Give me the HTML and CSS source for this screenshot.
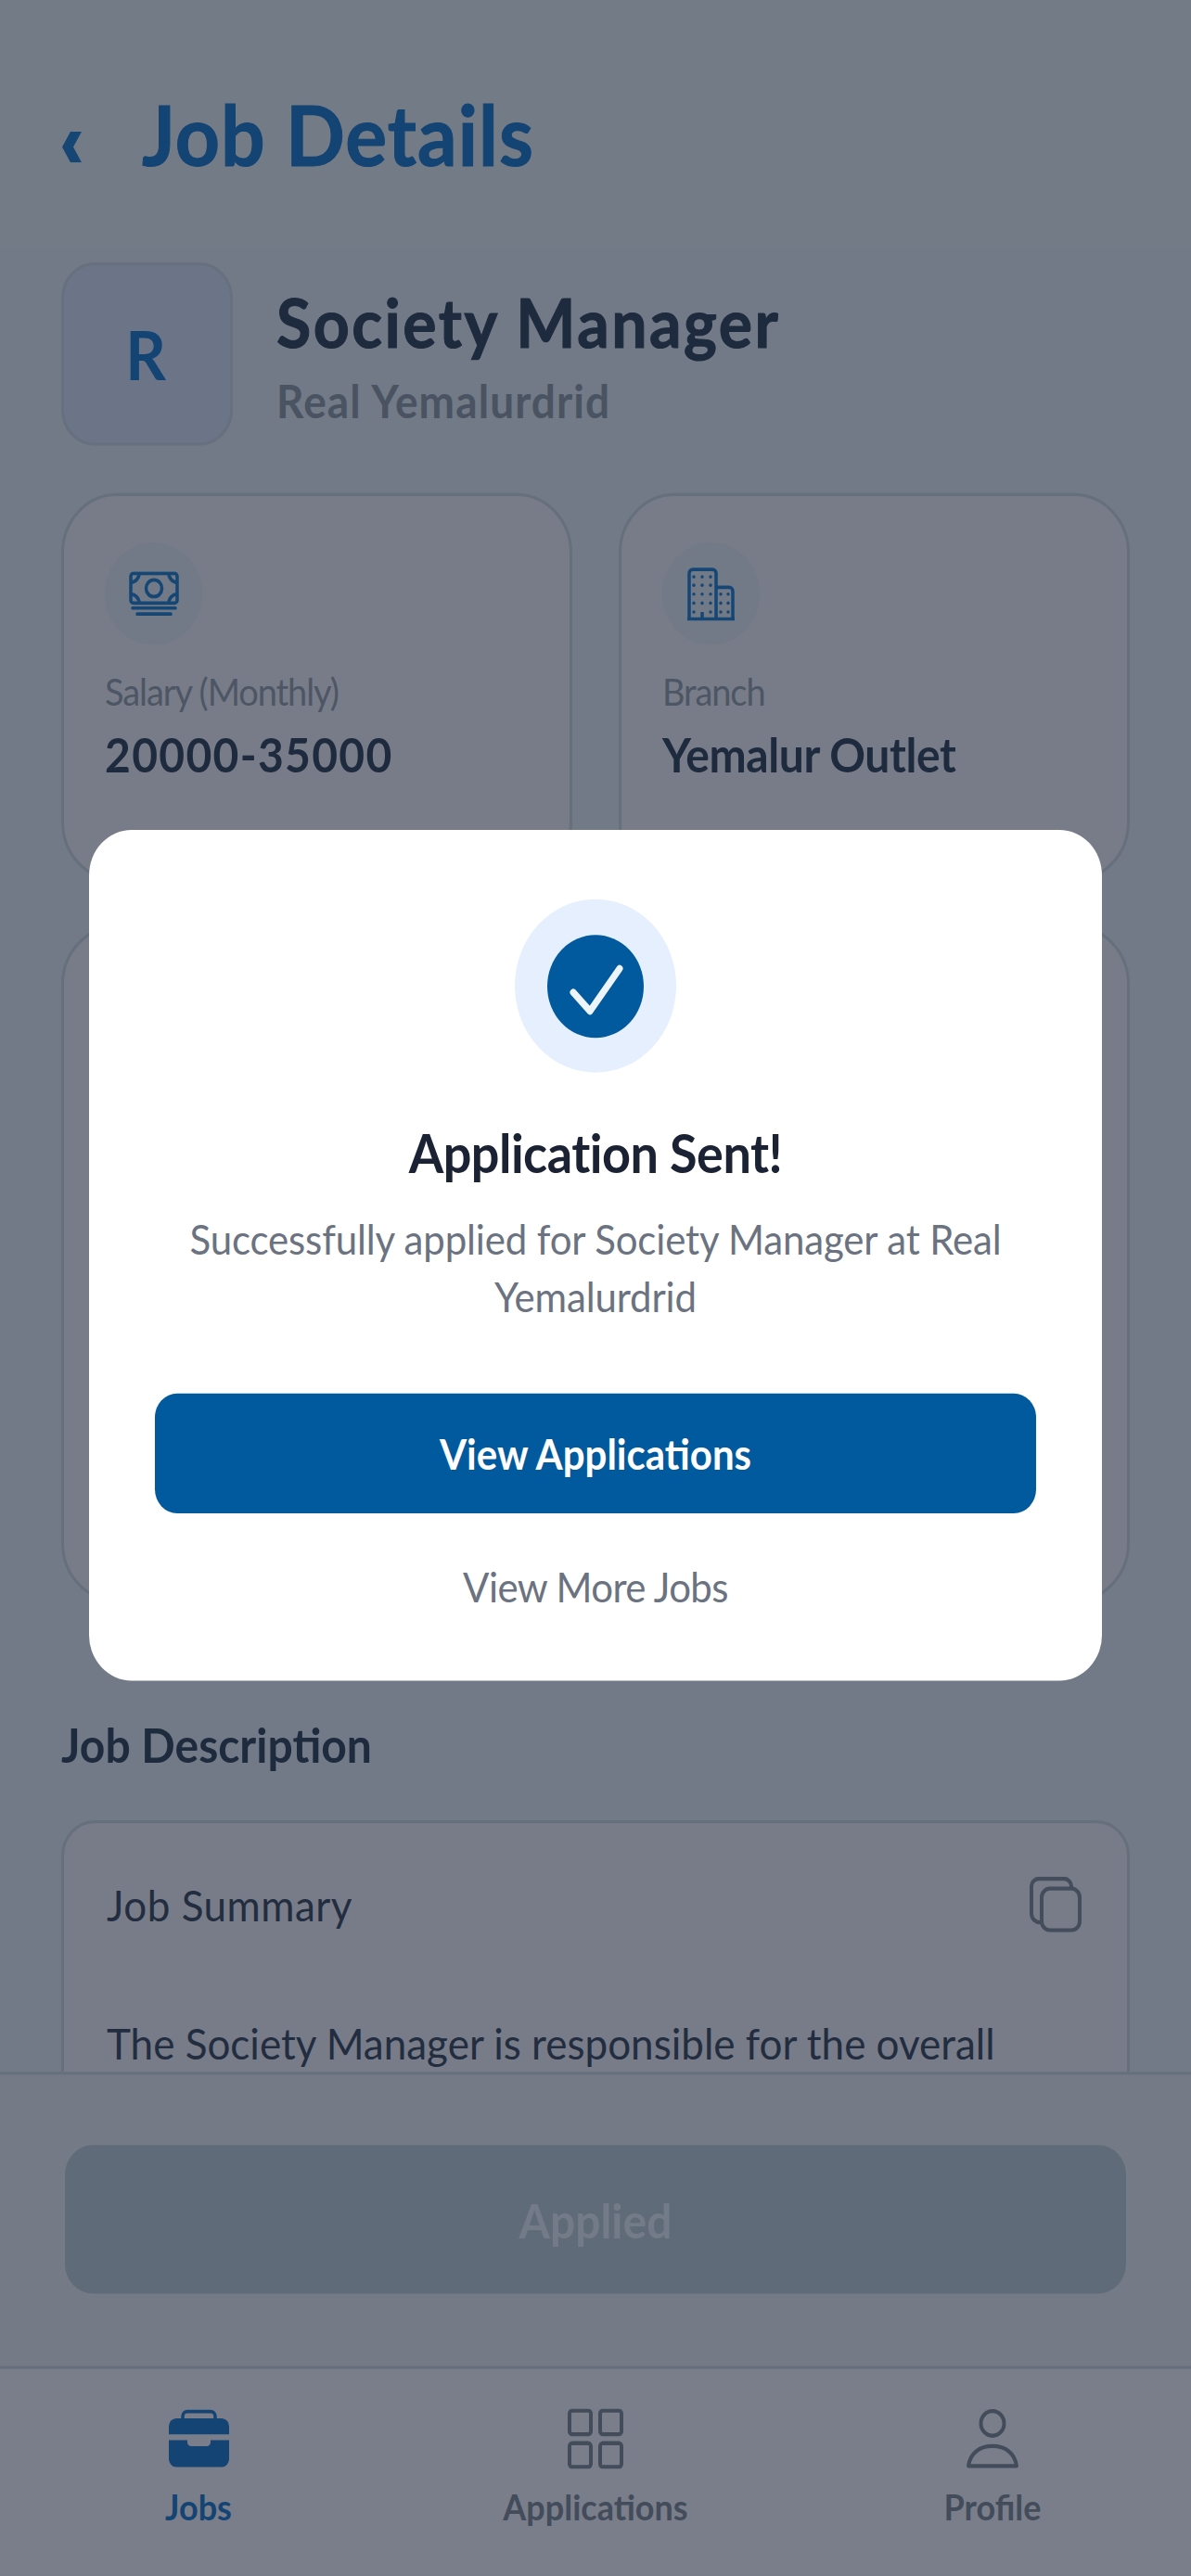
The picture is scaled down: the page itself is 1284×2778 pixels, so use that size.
FILE: index.html
```html
<!DOCTYPE html>
<html lang="en">
<head>
    <meta charset="UTF-8">
    <meta name="viewport" content="width=device-width, initial-scale=1.0">
    <title>Job Details</title>
    <link rel="stylesheet" href="styles.css">
</head>
<body>
    <div class="screen">
        <header class="top-bar">
            <svg class="back" viewBox="0 0 22 31"><polygon points="9,0 21,0 12,15.5 21,31 9,31 0,15.5"/></svg>
            <h1>Job Details</h1>
        </header>

        <main class="content">
            <div class="job-head">
                <div class="logo">R</div>
                <div class="job-title">
                    <h2>Society Manager</h2>
                    <p>Real Yemalurdrid</p>
                </div>
            </div>

            <div class="info-grid">
                <div class="info-card">
                    <div class="info-icon">
                        <!-- banknote -->
                        <svg width="56" height="46" viewBox="0 0 56 46">
                            <rect x="3" y="2" width="50" height="30" rx="3"/>
                            <ellipse cx="28" cy="17" rx="8.5" ry="8.5"/>
                            <path d="M3 11a9 9 0 0 0 9-9M44 2a9 9 0 0 0 9 9M3 23a9 9 0 0 1 9 9M44 32a9 9 0 0 1 9-9"/>
                            <path d="M5 37h46M10 43h36" stroke-linecap="round"/>
                        </svg>
                    </div>
                    <div class="info-label">Salary (Monthly)</div>
                    <div class="info-value num">20000-35000</div>
                </div>
                <div class="info-card">
                    <div class="info-icon">
                        <!-- office buildings -->
                        <svg width="52" height="54" viewBox="0 0 52 54">
                            <path d="M2 52V6a4 4 0 0 1 4-4h21a4 4 0 0 1 4 4v46"/>
                            <path d="M31 20h14a4 4 0 0 1 4 4v28"/>
                            <path d="M0 52h51M16 45v7"/>
                            <g class="dots">
                                <circle cx="7" cy="9.5" r="1.7"/><circle cx="16" cy="9.5" r="1.7"/><circle cx="25" cy="9.5" r="1.7"/>
                                <circle cx="7" cy="18" r="1.7"/><circle cx="16" cy="18" r="1.7"/><circle cx="25" cy="18" r="1.7"/>
                                <circle cx="7" cy="27" r="1.7"/><circle cx="16" cy="27" r="1.7"/><circle cx="25" cy="27" r="1.7"/>
                                <circle cx="7" cy="36" r="1.7"/><circle cx="16" cy="36" r="1.7"/><circle cx="25" cy="36" r="1.7"/>
                                <circle cx="7" cy="45" r="1.7"/><circle cx="25" cy="45" r="1.7"/>
                                <circle cx="36" cy="27" r="1.7"/><circle cx="44" cy="27" r="1.7"/>
                                <circle cx="36" cy="36" r="1.7"/><circle cx="44" cy="36" r="1.7"/>
                                <circle cx="36" cy="45" r="1.7"/><circle cx="44" cy="45" r="1.7"/>
                            </g>
                        </svg>
                    </div>
                    <div class="info-label">Branch</div>
                    <div class="info-value">Yemalur Outlet</div>
                </div>
                <div class="info-card wide"></div>
                <div class="info-card wide"></div>
            </div>

            <h3 class="section-title">Job Description</h3>
            <div class="desc-card">
                <div class="desc-head">
                    <span>Job Summary</span>
                    <svg class="copy" width="56" height="56" viewBox="0 0 56 56">
                        <rect x="13" y="12" width="41" height="42" rx="9"/>
                        <path d="M45 11V10a8 8 0 0 0-8-8H10a8 8 0 0 0-8 8v27a9 9 0 0 0 10 9"/>
                    </svg>
                </div>
                <p>The Society Manager is responsible for the overall</p>
            </div>
        </main>

        <div class="apply-bar">
            <button class="applied">Applied</button>
        </div>

        <nav class="tabs">
            <div class="tab active">
                <svg width="65" height="61" viewBox="0 0 65 61">
                    <path class="handle" d="M15 11V8a5 5 0 0 1 5-5h25a5 5 0 0 1 5 5v3"/>
                    <path d="M0 26v-8a8 8 0 0 1 8-8h49a8 8 0 0 1 8 8v8z"/>
                    <path d="M0 32h20v2a4 4 0 0 0 4 4h17a4 4 0 0 0 4-4v-2h20v19a8 8 0 0 1-8 8H8a8 8 0 0 1-8-8z"/>
                </svg>
                <span>Jobs</span>
            </div>
            <div class="tab">
                <svg width="60" height="61" viewBox="0 0 60 61">
                    <rect x="2" y="2" width="23" height="24" rx="3"/>
                    <rect x="35" y="2" width="23" height="24" rx="3"/>
                    <rect x="2" y="35" width="23" height="24" rx="3"/>
                    <rect x="35" y="35" width="23" height="24" rx="3"/>
                </svg>
                <span>Applications</span>
            </div>
            <div class="tab">
                <svg width="56" height="61" viewBox="0 0 56 61">
                    <circle cx="28" cy="15" r="12.5"/>
                    <path d="M2 58C4 45 14 38 28 38s24 7 26 20z"/>
                </svg>
                <span>Profile</span>
            </div>
        </nav>

        <!-- confirmation dialog -->
        <div class="modal">
            <div class="check-ring">
                <div class="check-dot">
                    <svg width="104" height="104" viewBox="0 0 104 104">
                        <path d="M28 58l18 19 32-43"/>
                    </svg>
                </div>
            </div>
            <h2>Application Sent!</h2>
            <p>Successfully applied for Society Manager at Real Yemalurdrid</p>
            <button class="primary">View Applications</button>
            <a class="more">View More Jobs</a>
        </div>
    </div>
</body>
</html>
```

FILE: styles.css
```css
html, body {
    margin: 0;
    height: 100%;
    background-color: #7a7e8a;
}
body {
    font-family: "Lato", "Open Sans", sans-serif;
}
h1, h2, h3, p {
    margin: 0;
    font-weight: normal;
}
/* whole screen is drawn a little taller than its layout box */
.screen {
    position: relative;
    width: 1284px;
    height: 2601px;
    display: flex;
    flex-direction: column;
    transform: scaleY(1.068);
    transform-origin: top left;
    background-color: #717a86;
}
.top-bar {
    height: 226px;
    padding: 23px 0 0 67px;
    flex-shrink: 0;
    display: flex;
    align-items: center;
    gap: 64px;
    background-color: #737b87;
}
.back {
    width: 22px;
    height: 31px;
    margin-top: 24px;
    fill: #154674;
}
.top-bar h1 {
    font-size: 84px;
    line-height: 100px;
    font-weight: 700;
    letter-spacing: 1px;
    color: #134473;
    -webkit-text-stroke: 1px #134473;
}
.content {
    flex: 1;
    min-height: 0;
    overflow: hidden;
    padding: 16px 66px 0;
}
.job-head {
    display: flex;
    gap: 47px;
}
.logo {
    width: 185px;
    height: 185px;
    box-sizing: border-box;
    padding-right: 3px;
    border: 3px solid #66707e;
    border-radius: 36px;
    background-color: #6b7587;
    display: flex;
    align-items: center;
    justify-content: center;
    font-size: 68px;
    font-weight: 700;
    color: #134473;
}
.job-title {
    padding-top: 20px;
}
.job-title h2 {
    font-size: 68px;
    line-height: 80px;
    font-weight: 700;
    letter-spacing: 2.5px;
    color: #1e2a3d;
    -webkit-text-stroke: 1px #1e2a3d;
}
.job-title p {
    margin-top: 8px;
    font-size: 46px;
    line-height: 64px;
    font-weight: 700;
    letter-spacing: 1.1px;
    color: #4a5362;
}
.info-grid {
    margin-top: 48px;
    display: grid;
    grid-template-columns: 551px 551px;
    grid-template-rows: 392px 684px;
    gap: 44px 50px;
}
.info-card {
    box-sizing: border-box;
    padding: 47px 44px 0;
    border: 3px solid #66707d;
    border-radius: 60px;
    background-color: #787c88;
}
.info-icon {
    width: 105px;
    height: 103px;
    border-radius: 50%;
    background-color: #717a86;
    display: flex;
    align-items: center;
    justify-content: center;
}
.info-icon svg {
    fill: none;
    stroke: #154674;
    stroke-width: 3.5;
}
.info-icon .dots {
    fill: #154674;
    stroke: none;
}
.info-label {
    margin-top: 19px;
    font-size: 38px;
    line-height: 56px;
    letter-spacing: -1.1px;
    color: #4d5664;
}
.info-value {
    margin-top: 6px;
    font-size: 48px;
    line-height: 60px;
    font-weight: 700;
    letter-spacing: -0.4px;
    color: #1e2a3d;
}
.info-value.num {
    letter-spacing: 1.3px;
}
.section-title {
    margin: 112px 0 0;
    font-size: 48px;
    line-height: 64px;
    font-weight: 700;
    color: #1e2a3d;
}
.desc-card {
    box-sizing: border-box;
    min-height: 420px;
    margin-top: 44px;
    padding: 52px 49px 0 46px;
    border: 3px solid #66707d;
    border-radius: 36px;
    background-color: #787c88;
    color: #222d40;
    font-size: 44px;
    line-height: 60px;
}
.desc-head {
    display: flex;
    justify-content: space-between;
    align-items: center;
    letter-spacing: 0.5px;
}
.copy {
    fill: none;
    stroke: #434d5c;
    stroke-width: 4;
}
.desc-card p {
    margin-top: 80px;
}
.apply-bar {
    height: 297px;
    flex-shrink: 0;
    box-sizing: border-box;
    padding: 71px 70px 0;
    border-top: 3px solid #66707d;
    background-color: #747b87;
}
.applied {
    width: 100%;
    height: 150px;
    border: none;
    border-radius: 30px;
    background-color: #5f6b78;
    font-family: inherit;
    font-size: 48px;
    font-weight: 700;
    color: #737b88;
}
.tabs {
    height: 212px;
    flex-shrink: 0;
    box-sizing: border-box;
    padding-top: 40px;
    border-top: 3px solid #66707d;
    background-color: #7a7e8a;
    display: grid;
    grid-template-columns: repeat(3, 1fr);
}
.tab {
    display: flex;
    flex-direction: column;
    align-items: center;
    gap: 15px;
    font-size: 36px;
    line-height: 46px;
    font-weight: 700;
    color: #434c5b;
}
.tab svg {
    fill: none;
    stroke: #434c5b;
    stroke-width: 4;
    stroke-linejoin: round;
}
.tab.active {
    color: #134473;
}
.tab.active svg {
    fill: #134473;
    stroke: none;
}
.tab.active .handle {
    fill: none;
    stroke: #134473;
    stroke-width: 3.5;
}
.modal {
    position: absolute;
    top: 838px;
    left: 96px;
    width: 1092px;
    box-sizing: border-box;
    padding: 70px 71px 65px;
    border-radius: 46px;
    background-color: #fff;
    display: flex;
    flex-direction: column;
    align-items: center;
    text-align: center;
}
.check-ring {
    width: 174px;
    height: 175px;
    border-radius: 50%;
    background-color: #e5effd;
    display: flex;
    align-items: center;
    justify-content: center;
}
.check-dot {
    width: 104px;
    height: 104px;
    border-radius: 50%;
    background-color: #025a9e;
}
.check-dot svg {
    fill: none;
    stroke: #eef4fc;
    stroke-width: 7;
    stroke-linecap: round;
    stroke-linejoin: round;
}
.modal h2 {
    margin-top: 46px;
    font-size: 54px;
    line-height: 70px;
    font-weight: 700;
    letter-spacing: -0.5px;
    color: #1a2233;
}
.modal p {
    margin-top: 23px;
    padding: 0 20px;
    font-size: 42px;
    line-height: 58px;
    letter-spacing: -0.15px;
    color: #6b7280;
}
.primary {
    width: 100%;
    height: 121px;
    margin-top: 69px;
    border: none;
    border-radius: 24px;
    background-color: #025a9e;
    font-family: inherit;
    font-size: 42px;
    font-weight: 700;
    color: #fff;
}
.more {
    margin-top: 44px;
    font-size: 42px;
    line-height: 60px;
    letter-spacing: -0.6px;
    color: #6b7280;
}
```
